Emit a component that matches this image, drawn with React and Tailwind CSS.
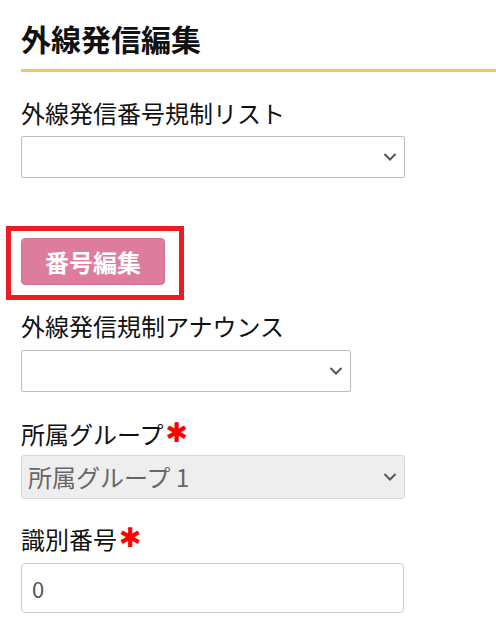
import React, { useState } from 'react';

const font = { fontFamily: '"Noto Sans CJK JP", "Noto Sans", sans-serif' };

const Chevron = () => (
  <svg
    className="pointer-events-none absolute right-[8px] top-1/2 -translate-y-1/2"
    width="14"
    height="9"
    viewBox="0 0 14 9"
    fill="none"
  >
    <path d="M1.5 1.5L7 7L12.5 1.5" stroke="#555" strokeWidth="2" />
  </svg>
);

// 必須マーク
const Required = () => (
  <span
    className="ml-[2px] self-start text-[27px] leading-[22px] text-[#ff0000]"
    style={{ fontFamily: '"DejaVu Sans", sans-serif' }}
  >
    ✱
  </span>
);

const App = () => {
  const [bango, setBango] = useState('0');

  return (
    <div className="min-h-screen bg-white text-[#111]" style={font}>
      {/* ヘッダー */}
      <div className="ml-[21px] border-b-[3px] border-[#f4c75b] pt-[23px] pb-[16px]">
        <h1 className="text-[30px] font-bold leading-[30px]">外線発信編集</h1>
      </div>

      <div className="px-[21px]">
        <label className="mt-[29px] block text-[24px] leading-[24px]">外線発信番号規制リスト</label>
        <div className="relative mt-[11px] w-[384px]">
          <select className="block h-[42px] w-full appearance-none rounded-[2px] border border-[#bdbdbd] bg-white px-[7px] text-[22px] outline-none">
            <option value=""></option>
          </select>
          <Chevron />
        </div>

        {/* 番号編集ボタン */}
        <div className="relative mt-[60px] w-[144px]">
          <button className="block h-[47px] w-[144px] rounded-[4px] border border-[#d06f90] bg-[#dd7c9c] text-[24px] font-bold leading-none text-white">
            番号編集
          </button>
          <div className="pointer-events-none absolute -left-[15px] -top-[12px] h-[74px] w-[178px] border-[5px] border-[#ea1c24]" />
        </div>

        <label className="mt-[29px] block text-[24px] leading-[24px]">外線発信規制アナウンス</label>
        <div className="relative mt-[12px] w-[330px]">
          <select className="block h-[42px] w-full appearance-none rounded-[2px] border border-[#bdbdbd] bg-white px-[7px] text-[22px] outline-none">
            <option value=""></option>
          </select>
          <Chevron />
        </div>

        <label className="mt-[30px] flex items-center text-[24px] leading-[24px]">
          所属グループ
          <Required />
        </label>
        <div className="relative mt-[9px] w-[384px]">
          <select
            disabled
            className="block h-[44px] w-full appearance-none rounded-[3px] border border-[#d8d8d8] bg-[#eeeeee] px-[6px] text-[24px] text-[#666] outline-none"
            style={font}
          >
            <option>所属グループ 1</option>
          </select>
          <Chevron />
        </div>

        <label className="mt-[28px] flex items-center text-[24px] leading-[24px]">
          識別番号
          <Required />
        </label>
        <input
          type="text"
          value={bango}
          onChange={(e) => setBango(e.target.value)}
          className="mt-[12px] block h-[50px] w-[383px] rounded-[4px] border border-[#cccccc] bg-white px-[10px] text-[22px] text-[#555] outline-none"
          style={font}
        />
      </div>
    </div>
  );
};

export default App;
